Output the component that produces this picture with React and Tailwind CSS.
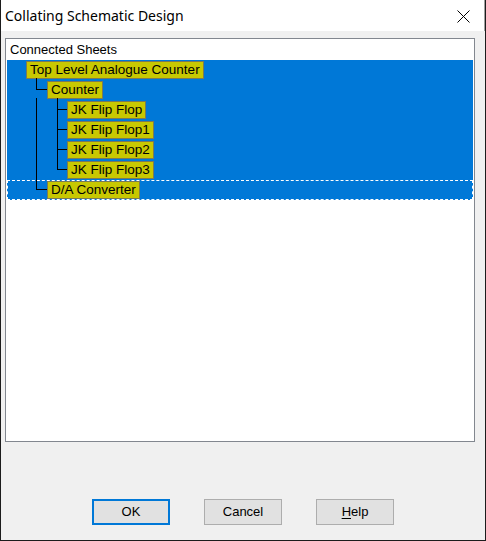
import React from "react";

const font = { fontFamily: '"Liberation Sans", Arial, sans-serif' };

function Node({ label, indent, focus }) {
  return (
    <div
      className={`h-[20px] flex items-start ${focus ? "outline-dashed outline-1 outline-white -outline-offset-1" : ""}`}
    >
      <div
        className={`${indent} mt-[1px] h-[18px] border border-[#7a7a55] bg-[#c8c800] px-[3px] text-[13.5px] leading-[15px] text-black whitespace-nowrap`}
      >
        {label}
      </div>
    </div>
  );
}

export default function App() {
  return (
    <div className="w-[486px] h-[541px] bg-[#1c1c1c] pl-[1px]" style={font}>
      <div className="w-[484px] h-[540px] flex flex-col bg-[#f0f0f0]">
        {/* Title bar */}
        <div className="h-[31px] bg-white flex items-center justify-between pl-[4px] pr-[14px] border-r border-[#a0a0a0]">
          <span
            className="text-[14px] text-black leading-[20px] pt-[1px]"
            style={{ fontFamily: '"Noto Sans", "Open Sans", sans-serif' }}
          >
            Collating Schematic Design
          </span>
          <svg width="13" height="13" viewBox="0 0 13 13" className="mt-[1px]">
            <line x1="0.5" y1="0.5" x2="12.5" y2="12.5" stroke="#000" strokeWidth="1" />
            <line x1="12.5" y1="0.5" x2="0.5" y2="12.5" stroke="#000" strokeWidth="1" />
          </svg>
        </div>

        {/* List box */}
        <div className="ml-[4px] mt-[7px] w-[470px] h-[404px] border border-[#82878f] bg-white pt-[1px] px-[1px]">
          <div className="h-[20px] pl-[3px] text-[13px] leading-[20px] text-black">Connected Sheets</div>
          <div className="relative bg-[#0078d7]">
            <Node label="Top Level Analogue Counter" indent="ml-[19px]" />
            <Node label="Counter" indent="ml-[40px]" />
            <Node label="JK Flip Flop" indent="ml-[60px]" />
            <Node label="JK Flip Flop1" indent="ml-[60px]" />
            <Node label="JK Flip Flop2" indent="ml-[60px]" />
            <Node label="JK Flip Flop3" indent="ml-[60px]" />
            <Node label="D/A Converter" indent="ml-[40px]" focus />
            <svg
              className="absolute left-0 top-0 pointer-events-none"
              width="100"
              height="140"
              shapeRendering="crispEdges"
            >
              <g stroke="#000" strokeWidth="1">
                <line x1="29.5" y1="18" x2="29.5" y2="29.5" />
                <line x1="29" y1="29.5" x2="40" y2="29.5" />
                <line x1="29.5" y1="38" x2="29.5" y2="129.5" />
                <line x1="29" y1="129.5" x2="40" y2="129.5" />
                <line x1="50.5" y1="38" x2="50.5" y2="109.5" />
                <line x1="50" y1="49.5" x2="60" y2="49.5" />
                <line x1="50" y1="69.5" x2="60" y2="69.5" />
                <line x1="50" y1="89.5" x2="60" y2="89.5" />
                <line x1="50" y1="109.5" x2="60" y2="109.5" />
              </g>
            </svg>
          </div>
        </div>

        {/* Buttons */}
        <div className="mt-[57px] flex justify-center gap-[34px] text-[13px] text-black">
          <button className="w-[78px] h-[26px] border-2 border-[#0078d7] bg-[#e1e1e1] leading-[22px]">OK</button>
          <button className="w-[78px] h-[26px] border border-[#adadad] bg-[#e1e1e1] leading-[24px]">Cancel</button>
          <button className="w-[78px] h-[26px] border border-[#adadad] bg-[#e1e1e1] leading-[24px]">
            <span className="underline underline-offset-2">H</span>elp
          </button>
        </div>
      </div>
    </div>
  );
}
